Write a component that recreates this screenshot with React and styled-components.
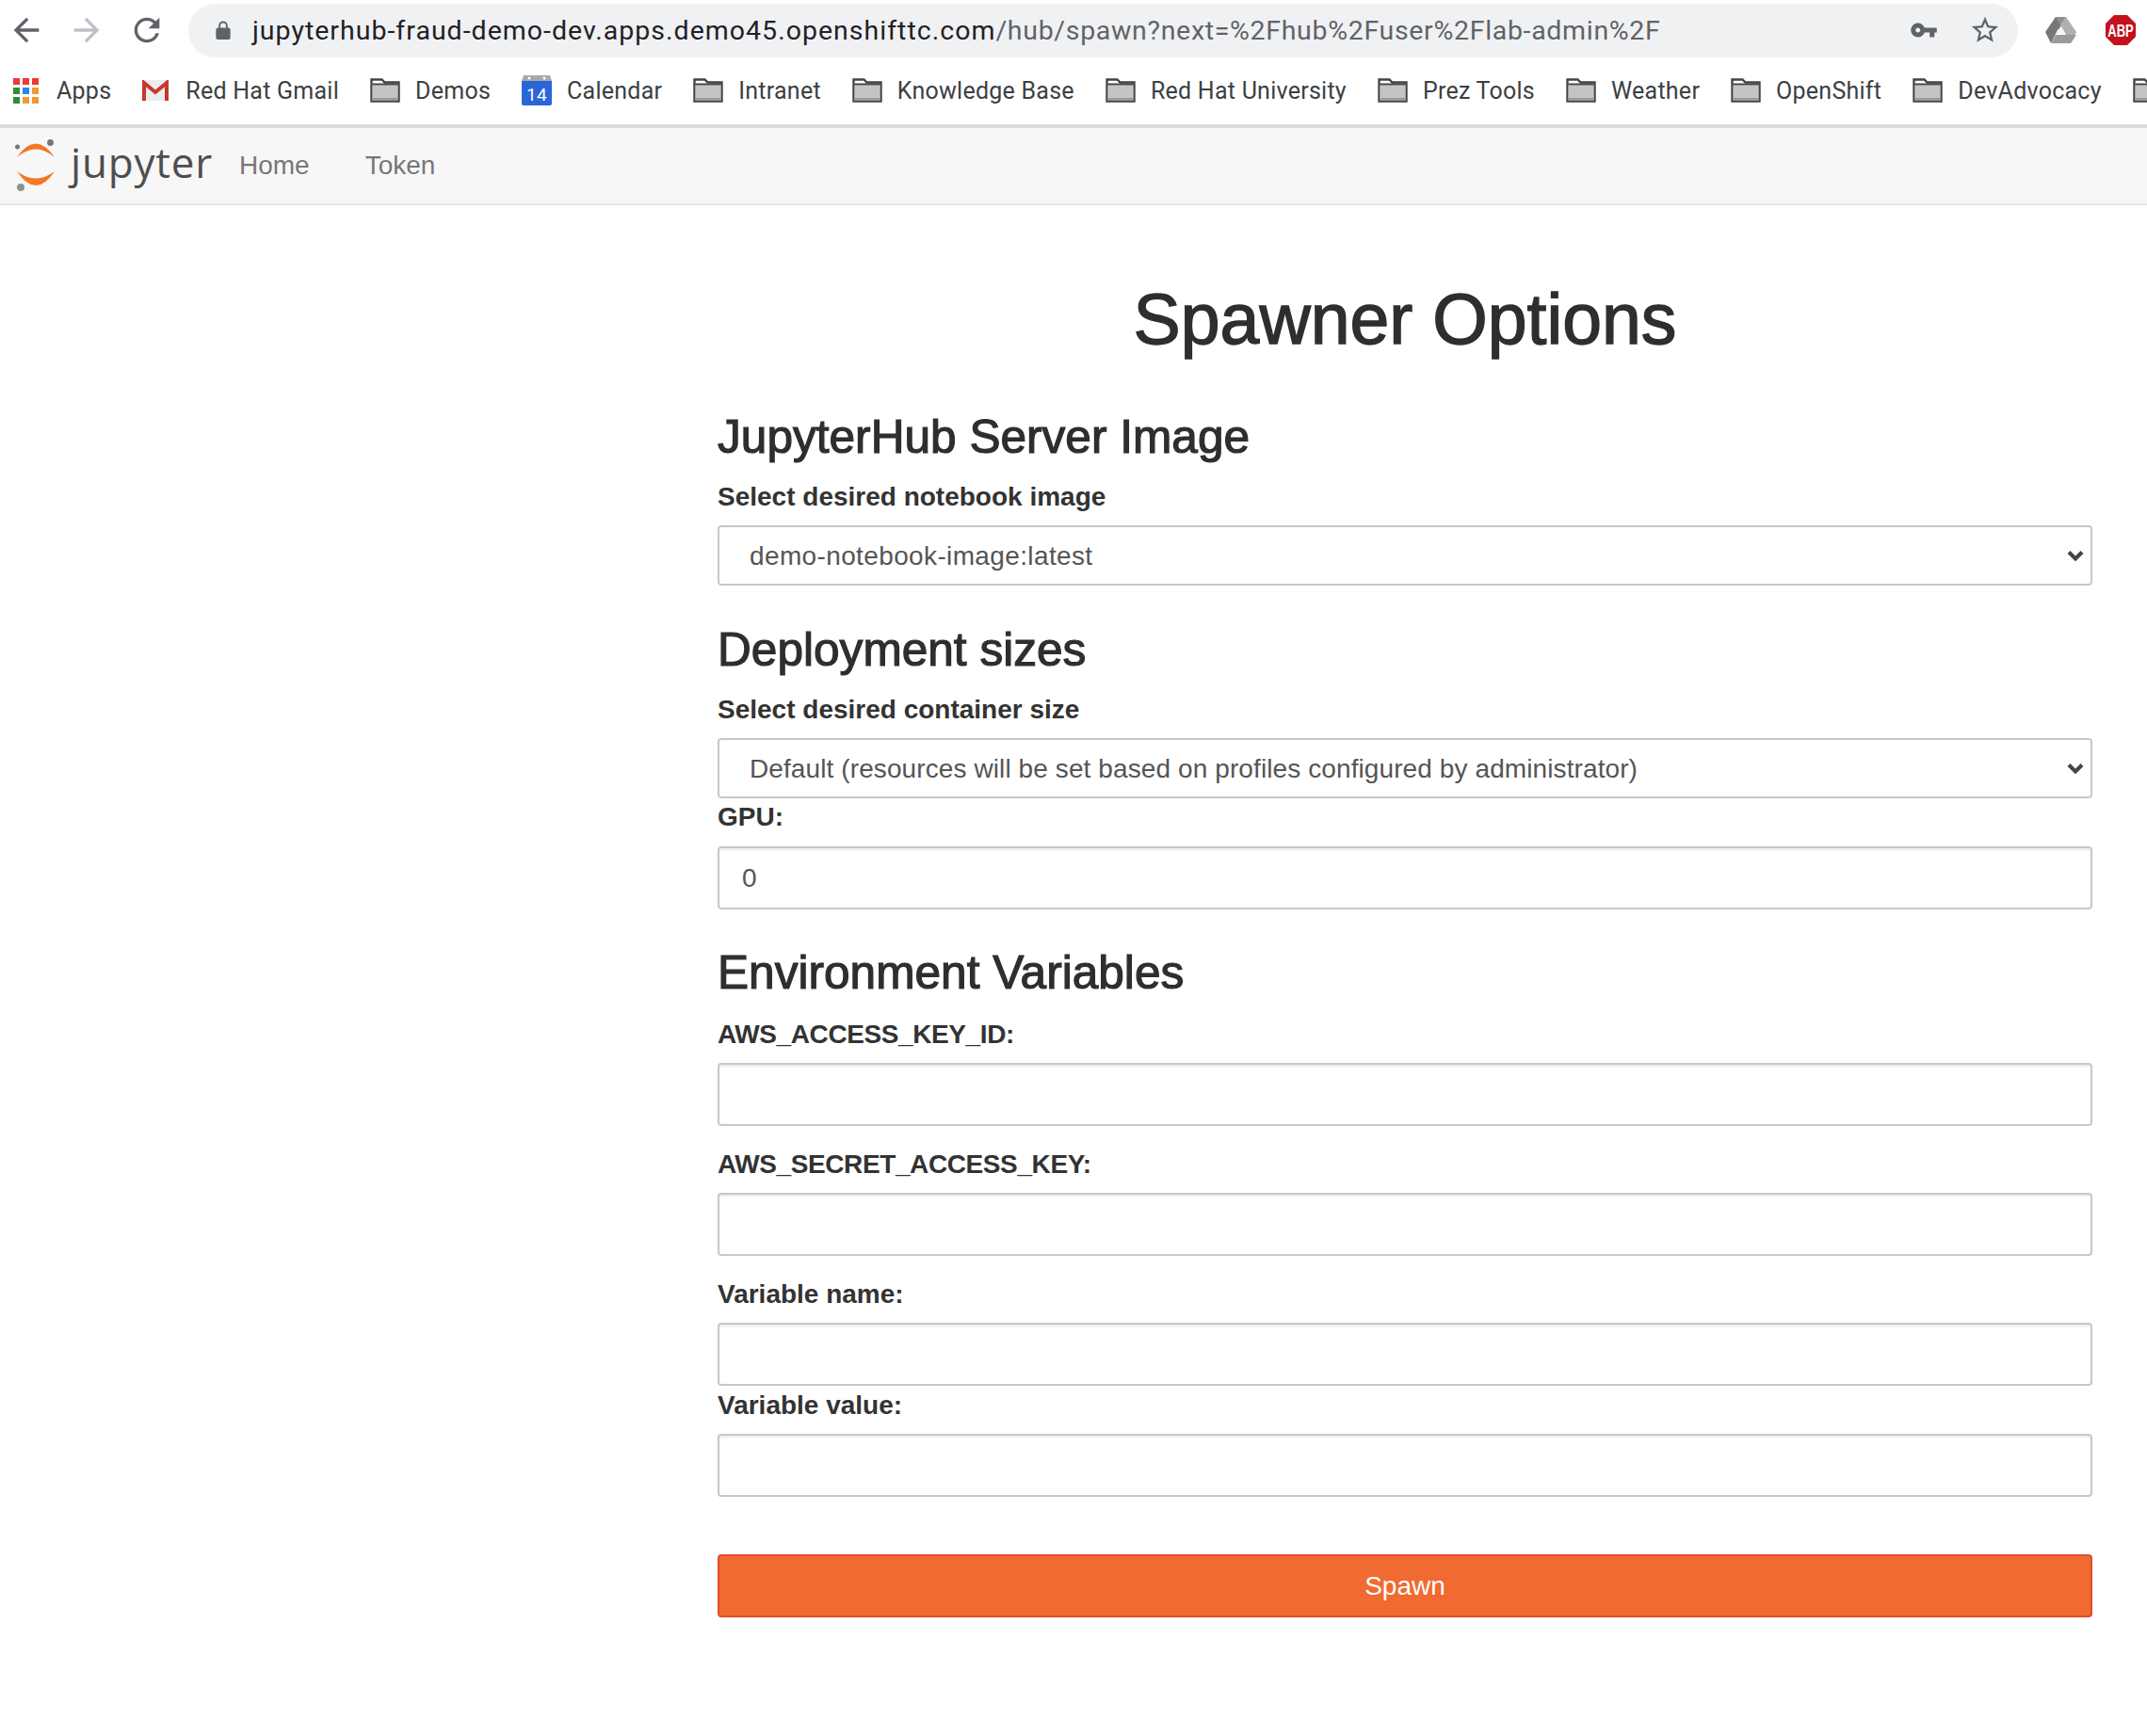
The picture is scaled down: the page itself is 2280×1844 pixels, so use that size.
import React from 'react';
import styled, { createGlobalStyle } from 'styled-components';

const GlobalStyle = createGlobalStyle`
  * { box-sizing: border-box; }
  html, body { margin: 0; padding: 0; background: #fff; }
  body { font-family: "Liberation Sans", Arial, sans-serif; color: #333; }
`;

const Page = styled.div`
  width: 2280px;
  height: 1844px;
  overflow: hidden;
`;

const Toolbar = styled.div`
  display: flex;
  align-items: center;
  height: 64px;
  padding: 0 0 0 8px;
`;

const NavIcon = styled.svg`
  width: 40px;
  height: 40px;
  margin-right: 24px;
  fill: ${(p) => (p.$off ? '#bdc1c6' : '#5f6368')};
  flex: none;
`;

const Omnibox = styled.div`
  display: flex;
  align-items: center;
  width: 1943px;
  height: 57px;
  padding: 0 18px 0 27px;
  border-radius: 29px;
  background: #f0f1f3;
  flex: none;
`;

const Url = styled.div`
  flex: 1;
  margin-left: 21px;
  font-family: Roboto, sans-serif;
  font-size: 28.5px;
  letter-spacing: 0.68px;
  color: #5f6368;
  white-space: nowrap;
`;

const UrlHost = styled.span`
  color: #202124;
  letter-spacing: 1.01px;
`;

const OmniIcon = styled.svg`
  flex: none;
  fill: #5f6368;
  width: ${(p) => p.$size}px;
  height: ${(p) => p.$size}px;
  margin-left: ${(p) => p.$gap || 0}px;
`;

const ExtIcon = styled.svg`
  flex: none;
  width: ${(p) => p.$w}px;
  height: ${(p) => p.$h}px;
  margin-left: ${(p) => p.$gap}px;
`;

const Bookmarks = styled.div`
  display: flex;
  align-items: center;
  height: 72px;
  padding: 0 0 4px 14px;
  gap: 33px;
  overflow: hidden;
  border-bottom: 4px solid #d9dadc;
`;

const Bookmark = styled.div`
  display: flex;
  align-items: center;
  flex: none;
  gap: ${(p) => p.$gap || 16}px;
  font-family: Roboto, sans-serif;
  font-size: 25px;
  letter-spacing: 0.25px;
  color: #3c4043;
`;

const BookmarkIcon = styled.svg`
  flex: none;
  display: block;
  width: ${(p) => p.$w || 32}px;
  height: ${(p) => p.$h || 26}px;
`;

const Navbar = styled.nav`
  display: flex;
  align-items: center;
  height: 82px;
  padding-left: 12px;
  background: #f7f7f7;
  border-bottom: 2px solid #e7e7e7;
`;

const LogoMark = styled.svg`
  flex: none;
  width: 52px;
  height: 62px;
`;

const LogoText = styled.div`
  width: 179px;
  margin-left: 11px;
  margin-top: -8px;
  font-family: "Open Sans", sans-serif;
  font-size: 44px;
  letter-spacing: 0.8px;
  color: #4e4e4e;
`;

const NavLink = styled.a`
  font-size: 28px;
  color: #777;
  margin-right: 59px;
`;

const Main = styled.main`
  width: 1460px;
  margin-left: 762px;
`;

const Title = styled.h1`
  margin: 81px 0 0;
  font-size: 75.2px;
  line-height: 80px;
  font-weight: 400;
  text-align: center;
  color: #2e2e2e;
  -webkit-text-stroke: 1.4px #2e2e2e;
`;

const Heading = styled.h2`
  margin: ${(p) => p.$top}px 0 0;
  font-size: 49.6px;
  line-height: 56px;
  font-weight: 400;
  color: #2e2e2e;
  -webkit-text-stroke: 1.2px #2e2e2e;
`;

const Label = styled.label`
  display: block;
  margin-top: ${(p) => p.$top || 0}px;
  margin-bottom: ${(p) => p.$bottom || 10}px;
  font-size: 28px;
  line-height: 40px;
  font-weight: 700;
  letter-spacing: ${(p) => (p.$tight ? '-0.4px' : '0')};
  color: #333;
`;

const Select = styled.select`
  display: block;
  width: 100%;
  height: 64px;
  padding: 0 40px 0 32px;
  appearance: none;
  border: 2px solid #c8c8c8;
  border-radius: 4px;
  font-family: "Liberation Sans", Arial, sans-serif;
  font-size: 28px;
  letter-spacing: ${(p) => (p.$wide ? '0.37px' : '0.1px')};
  color: #555;
  background-color: #fff;
  background-image: url("data:image/svg+xml,%3Csvg xmlns='http://www.w3.org/2000/svg' width='18' height='12'%3E%3Cpath d='M2 2.5l7 7 7-7' fill='none' stroke='%23444' stroke-width='4'/%3E%3C/svg%3E");
  background-repeat: no-repeat;
  background-position: right 7px center;
`;

const Input = styled.input`
  display: block;
  width: 100%;
  height: 67px;
  padding: 0 24px;
  border: 2px solid #c8c8c8;
  border-radius: 4px;
  box-shadow: inset 0 2px 2px rgba(0, 0, 0, 0.075);
  font-family: "Liberation Sans", Arial, sans-serif;
  font-size: 28px;
  color: #555;
  background: #fff;
`;

const SpawnButton = styled.button`
  display: block;
  width: 100%;
  height: 67px;
  margin-top: 61px;
  border: 2px solid #e34e2a;
  border-radius: 4px;
  font-family: "Liberation Sans", Arial, sans-serif;
  font-size: 28px;
  color: #fff;
  background: #f06a31;
`;

const Folder = () => (
  <BookmarkIcon viewBox="0 0 32 26">
    <path d="M1.5 1.5h11l3 3h15v20h-29z" fill="#fff" stroke="#444" strokeWidth="2.4" />
    <path d="M2.5 7.5h27v16h-27z" fill="#c4c4c4" />
    <path d="M2.5 6.5h27" stroke="#444" strokeWidth="2" />
    <path d="M2.5 21h27v3h-27z" fill="#9a9a9a" />
  </BookmarkIcon>
);

const AppsIcon = () => (
  <BookmarkIcon $w={27} $h={27} viewBox="0 0 27 27">
    {[
      ['#ea3b35', '#ea3b35', '#ea3b35'],
      ['#34893f', '#2a86ea', '#f09b2c'],
      ['#34893f', '#f09b2c', '#f09b2c'],
    ].map((row, y) =>
      row.map((c, x) => <rect key={`${x}-${y}`} x={x * 10} y={y * 10} width="7" height="7" fill={c} />)
    )}
  </BookmarkIcon>
);

const GmailIcon = () => (
  <BookmarkIcon $w={28} $h={22} viewBox="0 0 28 22">
    <path d="M0 0h28v22H0z" fill="#ececec" />
    <path d="M2 22V3l12 10L26 3v19" fill="none" stroke="#c8372d" strokeWidth="4" />
  </BookmarkIcon>
);

const CalendarIcon = () => (
  <BookmarkIcon $w={32} $h={32} viewBox="0 0 32 32">
    <path d="M2 0h28l2 6H0z" fill="#a9a9a9" />
    <circle cx="8" cy="3" r="1.5" fill="#fff" />
    <circle cx="24" cy="3" r="1.5" fill="#fff" />
    <path d="M0 6h32v24a2 2 0 0 1-2 2H2a2 2 0 0 1-2-2z" fill="#2a66d8" />
    <text x="16" y="27" textAnchor="middle" fontFamily="Roboto, sans-serif" fontSize="19" fill="#fff">14</text>
  </BookmarkIcon>
);

const moreFolders = ['Intranet', 'Knowledge Base', 'Red Hat University', 'Prez Tools', 'Weather', 'OpenShift', 'DevAdvocacy', ''];

export default function App() {
  return (
    <Page>
      <GlobalStyle />
      <Toolbar>
        <NavIcon viewBox="0 0 24 24">
          <path d="M20 11H7.83l5.59-5.59L12 4l-8 8 8 8 1.41-1.41L7.83 13H20v-2z" />
        </NavIcon>
        <NavIcon viewBox="0 0 24 24" $off>
          <path d="M4 11h12.17l-5.59-5.59L12 4l8 8-8 8-1.41-1.41L16.17 13H4v-2z" />
        </NavIcon>
        <NavIcon viewBox="0 0 24 24">
          <path d="M17.65 6.35A7.958 7.958 0 0012 4c-4.42 0-7.99 3.58-7.99 8s3.57 8 7.99 8c3.73 0 6.84-2.55 7.73-6h-2.08A5.99 5.99 0 0112 18c-3.31 0-6-2.69-6-6s2.69-6 6-6c1.66 0 3.14.69 4.22 1.78L13 11h7V4l-2.35 2.35z" />
        </NavIcon>
        <Omnibox>
          <OmniIcon $size={20} viewBox="0 0 16 21">
            <path d="M3 8V5.5a5 5 0 0 1 10 0V8h1a2 2 0 0 1 2 2v9a2 2 0 0 1-2 2H2a2 2 0 0 1-2-2v-9a2 2 0 0 1 2-2zm2 0h6V5.5a3 3 0 0 0-6 0z" />
          </OmniIcon>
          <Url>
            <UrlHost>jupyterhub-fraud-demo-dev.apps.demo45.openshifttc.com</UrlHost>/hub/spawn?next=%2Fhub%2Fuser%2Flab-admin%2F
          </Url>
          <OmniIcon $size={30} viewBox="0 0 24 24">
            <path d="M12.65 10C11.83 7.67 9.61 6 7 6c-3.31 0-6 2.69-6 6s2.69 6 6 6c2.61 0 4.83-1.67 5.65-4H17v4h4v-4h2v-4H12.65zM7 14c-1.1 0-2-.9-2-2s.9-2 2-2 2 .9 2 2-.9 2-2 2z" />
          </OmniIcon>
          <OmniIcon $size={34} $gap={33} viewBox="0 0 24 24">
            <path d="M22 9.24l-7.19-.62L12 2 9.19 8.63 2 9.24l5.46 4.73L5.82 21 12 17.27 18.18 21l-1.63-7.03L22 9.24zM12 15.4l-3.76 2.27 1-4.28-3.32-2.88 4.38-.38L12 6.1l1.71 4.04 4.38.38-3.32 2.88 1 4.28L12 15.4z" />
          </OmniIcon>
        </Omnibox>
        <ExtIcon $w={33} $h={28} $gap={29} viewBox="0 0 33 28">
          <path d="M11 0h11l-7 13H4z" fill="#8f8f8f" />
          <path d="M22 0l11 16-6 12-11-20z" fill="#b0b0b0" />
          <path d="M0 16L11 0l5 8-10 20z" fill="#777" />
          <path d="M6 28l5-9h22l-6 9z" fill="#9b9b9b" />
          <path d="M16.5 10l4.5 8h-9z" fill="#f4f4f4" />
        </ExtIcon>
        <ExtIcon $w={32} $h={32} $gap={31} viewBox="0 0 32 32">
          <path d="M9 0h14l9 9v14l-9 9H9l-9-9V9z" fill="#c4111b" />
          <text transform="translate(16 22.5) scale(1 1.4)" textAnchor="middle" fontFamily="Liberation Sans, sans-serif" fontSize="13" fontWeight="700" fill="#fff">ABP</text>
        </ExtIcon>
      </Toolbar>
      <Bookmarks>
        <Bookmark $gap={19}>
          <AppsIcon />
          Apps
        </Bookmark>
        <Bookmark $gap={18}>
          <GmailIcon />
          Red Hat Gmail
        </Bookmark>
        <Bookmark>
          <Folder />
          Demos
        </Bookmark>
        <Bookmark>
          <CalendarIcon />
          Calendar
        </Bookmark>
        {moreFolders.map((name) => (
          <Bookmark key={name}>
            <Folder />
            {name}
          </Bookmark>
        ))}
      </Bookmarks>
      <Navbar>
        <LogoMark viewBox="12 145 52 62">
          <path d="M18 167Q38 138 58 167Q38 150 18 167z" fill="#f37726" />
          <path d="M18 182Q38 212 58 182Q38 197 18 182z" fill="#f37726" />
          <circle cx="18.5" cy="156" r="2.5" fill="#767677" />
          <circle cx="53.5" cy="151.5" r="3.4" fill="#767677" />
          <circle cx="22" cy="199" r="4" fill="#909090" />
        </LogoMark>
        <LogoText>jupyter</LogoText>
        <NavLink>Home</NavLink>
        <NavLink>Token</NavLink>
      </Navbar>
      <Main>
        <Title>Spawner Options</Title>
        <Heading $top={57}>JupyterHub Server Image</Heading>
        <Label $top={16}>Select desired notebook image</Label>
        <Select defaultValue="latest" $wide>
          <option value="latest">demo-notebook-image:latest</option>
        </Select>
        <Heading $top={40}>Deployment sizes</Heading>
        <Label $top={16}>Select desired container size</Label>
        <Select defaultValue="default">
          <option value="default">Default (resources will be set based on profiles configured by administrator)</option>
        </Select>
        <Label $bottom={11}>GPU:</Label>
        <Input defaultValue="0" />
        <Heading $top={39}>Environment Variables</Heading>
        <Label $top={18} $tight>AWS_ACCESS_KEY_ID:</Label>
        <Input />
        <Label $top={21} $tight>AWS_SECRET_ACCESS_KEY:</Label>
        <Input />
        <Label $top={21}>Variable name:</Label>
        <Input />
        <Label $top={1}>Variable value:</Label>
        <Input />
        <SpawnButton>Spawn</SpawnButton>
      </Main>
    </Page>
  );
}
